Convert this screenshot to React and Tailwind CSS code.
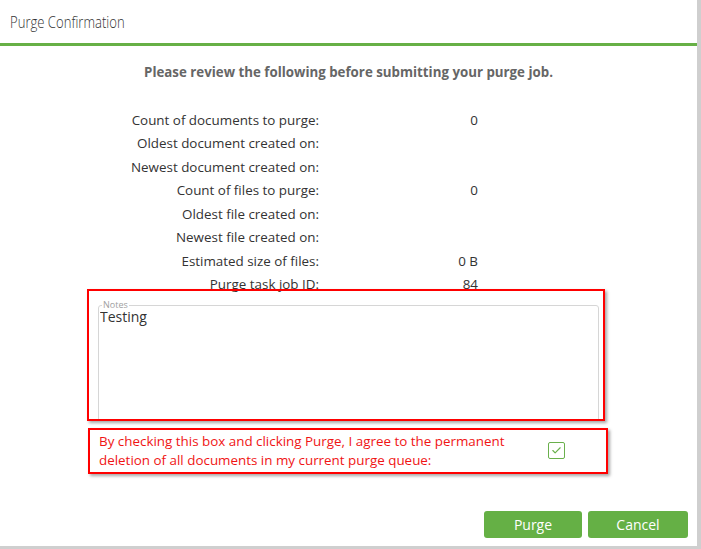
import React from "react";
import { Check } from "lucide-react";

const ROWS = [
  ["Count of documents to purge:", "0"],
  ["Oldest document created on:", ""],
  ["Newest document created on:", ""],
  ["Count of files to purge:", "0"],
  ["Oldest file created on:", ""],
  ["Newest file created on:", ""],
  ["Estimated size of files:", "0 B"],
  ["Purge task job ID:", "84"],
];

export default function App() {
  return (
    <div
      className="w-[701px] h-[549px] bg-[#cfcfcf] overflow-hidden"
      style={{ fontFamily: "'Open Sans', 'Noto Sans', sans-serif" }}
    >
      <div className="w-[697px] h-[546px] bg-white flex flex-col">
        {/* Header */}
        <div className="h-[43px] px-[10px] flex items-center">
          <h1 className="text-[17px] font-light text-[#333] origin-left scale-x-[0.77]">Purge Confirmation</h1>
        </div>
        <div className="h-[3px] bg-[#67b046]" />

        {/* Body */}
        <p className="mt-[17px] text-center text-[13.3px] font-bold text-[#666]">
          Please review the following before submitting your purge job.
        </p>

        <div className="mt-[25px] flex flex-col">
          {ROWS.map(([label, value]) => (
            <div key={label} className="h-[23.5px] flex items-center text-[13.4px] text-[#333]">
              <span className="w-[319px] text-right">{label}</span>
              <span className="w-[159px] text-right">{value}</span>
            </div>
          ))}
        </div>

        {/* Notes */}
        <div className="relative -mt-[7px] ml-[87px] w-[518px] h-[132px] border-2 border-[#ff0000] shadow-[2px_2px_3px_rgba(0,0,0,0.35)] overflow-hidden pt-[14px] pl-[9px] pr-[4px]">
          <div className="relative h-[140px] border border-[#d6d6d6] rounded-[3px] px-[1px] pt-[3px]">
            <span className="absolute -top-[5px] left-[3px] bg-white px-[1px] text-[9px] leading-[8px] text-[#a0a0a0]">Notes</span>
            <textarea
              readOnly
              value="Testing"
              className="block w-full h-[120px] p-0 resize-none outline-none bg-transparent text-[14px] leading-[16px] text-[#333]"
            />
          </div>
        </div>

        {/* Agreement */}
        <div className="mt-[7px] ml-[88px] w-[520px] h-[46px] border-2 border-[#ff0000] shadow-[2px_2px_3px_rgba(0,0,0,0.35)] flex items-center pl-[9px] pr-[41px]">
          <p className="flex-1 text-[13.4px] leading-[19px] text-[#f01414]">
            By checking this box and clicking Purge, I agree to the permanent
            <br />
            deletion of all documents in my current purge queue:
          </p>
          <div className="w-[17px] h-[17px] border border-[#6ab04c] rounded-[2px] flex items-center justify-center">
            <Check className="w-[11px] h-[11px] text-[#6ab04c]" strokeWidth={2.5} />
          </div>
        </div>

        {/* Buttons */}
        <div className="mt-auto mb-[8px] mr-[9px] flex justify-end gap-[6px]">
          <button className="w-[98px] h-[27px] rounded-[3px] bg-[#65b045] text-white text-[14px]">Purge</button>
          <button className="w-[100px] h-[27px] rounded-[3px] bg-[#65b045] text-white text-[14px]">Cancel</button>
        </div>
      </div>
    </div>
  );
}
